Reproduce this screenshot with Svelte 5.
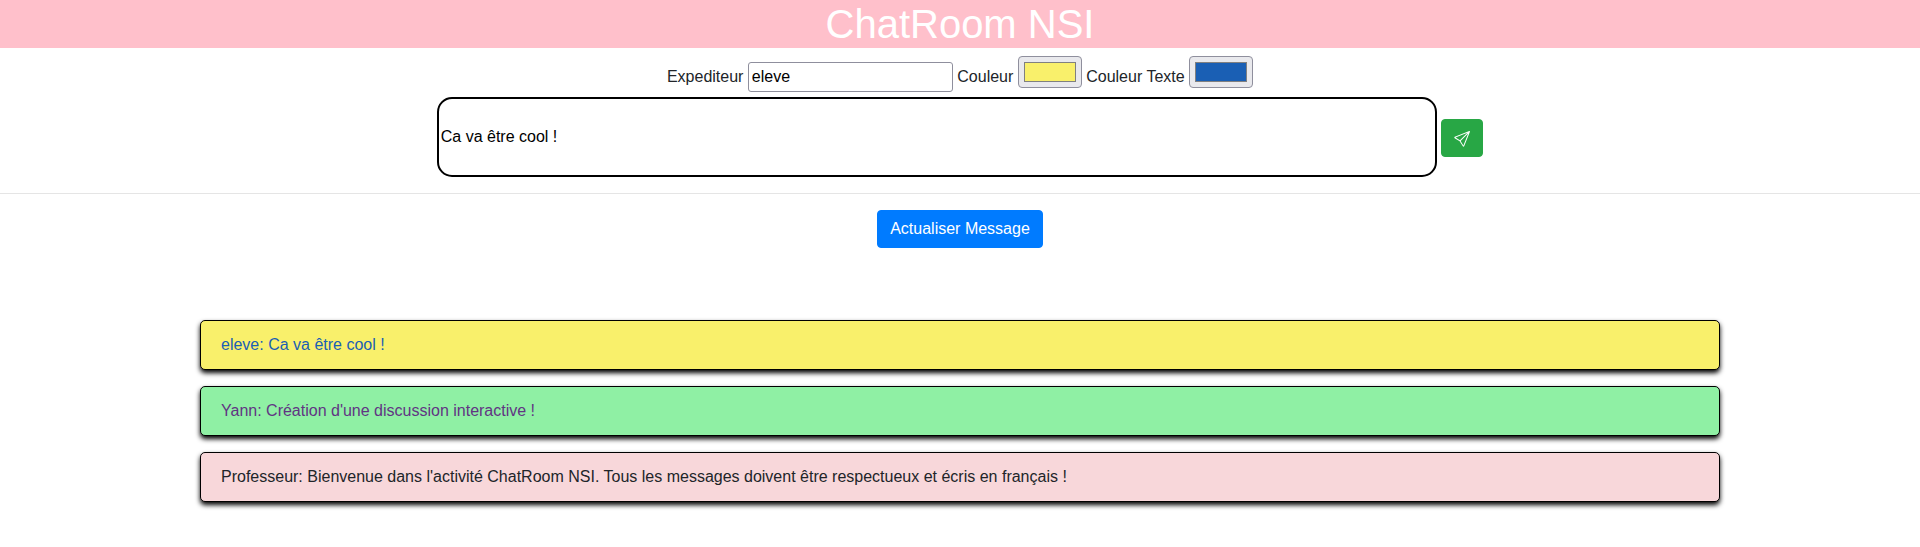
<script>
  let sender = $state('eleve');
  let draft = $state('Ca va être cool !');
  const fill = '#f9f06b';
  const ink = '#1a5fb4';
  const messages = [
    { from: 'eleve', text: 'Ca va être cool !', bg: '#f9f06b', fg: '#1a5fb4' },
    { from: 'Yann', text: "Création d'une discussion interactive !", bg: '#8ff0a4', fg: '#613583' },
    {
      from: 'Professeur',
      text: "Bienvenue dans l'activité ChatRoom NSI. Tous les messages doivent être respectueux et écris en français !",
      bg: '#f8d7da',
      fg: '#212529'
    }
  ];
</script>

<h1>ChatRoom NSI</h1>

<div class="options">
  <label for="sender">Expediteur</label>
  <input id="sender" class="sender" type="text" bind:value={sender} />
  <span class="label">Couleur</span>
  <button class="swatch" aria-label="Couleur"><span style:background={fill}></span></button>
  <span class="label">Couleur Texte</span>
  <button class="swatch" aria-label="Couleur Texte"><span style:background={ink}></span></button>
</div>

<div class="compose">
  <input class="draft" type="text" aria-label="Message" bind:value={draft} />
  <button class="btn send" aria-label="Envoyer">
    <svg width="16" height="16" viewBox="0 0 16 16" fill="currentColor">
      <path d="M15.854.146a.5.5 0 0 1 .11.54l-5.819 14.547a.75.75 0 0 1-1.329.124l-3.178-4.995L.643 7.184a.75.75 0 0 1 .124-1.33L15.314.037a.5.5 0 0 1 .54.11ZM6.636 10.07l2.761 4.338L14.13 2.576 6.636 10.07Zm6.787-8.201L1.591 6.602l4.339 2.76 7.494-7.493Z" />
    </svg>
  </button>
</div>

<hr />

<div class="refresh">
  <button class="btn primary">Actualiser Message</button>
</div>

<div class="messages">
  {#each messages as m}
    <div class="message" style:background-color={m.bg} style:color={m.fg}>{m.from}: {m.text}</div>
  {/each}
</div>

<style>
  :global(body) {
    background: #fff;
    color: #212529;
    font: 16px/24px 'Liberation Sans', Arial, sans-serif;
  }
  h1 {
    margin: 0;
    background: pink;
    color: #fff;
    font-size: 40px;
    font-weight: 400;
    line-height: 48px;
    text-align: center;
  }
  input,
  button {
    box-sizing: border-box;
    margin: 0;
    font: inherit;
  }
  .options {
    display: flex;
    justify-content: center;
    align-items: flex-start;
    gap: 4.45px;
    height: 49px;
  }
  label,
  .label {
    margin-top: 17px;
    white-space: nowrap;
  }
  .sender {
    width: 205px;
    height: 30px;
    margin-top: 14px;
    padding: 1px 3px;
    border: 1px solid #8f8f9d;
    border-radius: 3px;
    background: #fff;
    color: #000;
  }
  .swatch {
    display: flex;
    width: 64px;
    height: 32px;
    margin-top: 8px;
    padding: 5px;
    border: 1px solid #8f8f9d;
    border-radius: 4px;
    background: #e9e9ed;
  }
  .swatch span {
    flex: 1;
    border: 1px solid #808080;
  }
  .compose {
    display: flex;
    justify-content: center;
    align-items: flex-start;
    gap: 4.45px;
    height: 80px;
  }
  .draft {
    width: 1000px;
    height: 80px;
    padding: 1px 2px;
    border: 2px solid #000;
    border-radius: 15px;
    background: #fff;
    color: #000;
    outline: 0;
  }
  .btn {
    height: 38px;
    padding: 6px 12px;
    border: 1px solid transparent;
    border-radius: 4px;
    color: #fff;
  }
  .send {
    margin-top: 22px;
    background-color: #28a745;
    border-color: #28a745;
  }
  .send svg {
    display: block;
    margin-top: 2px;
  }
  hr {
    margin: 16px 0;
    border: 0;
    border-top: 1px solid rgba(0, 0, 0, 0.1);
  }
  .refresh {
    display: flex;
    justify-content: center;
  }
  .primary {
    background-color: #007bff;
    border-color: #007bff;
  }
  .messages {
    display: flex;
    flex-direction: column;
    gap: 16px;
    padding: 72px 200px 40px;
  }
  .message {
    padding: 12px 20px;
    border: 1px solid #000;
    border-radius: 5px;
    box-shadow: 0 3px 5px #000;
  }
</style>
